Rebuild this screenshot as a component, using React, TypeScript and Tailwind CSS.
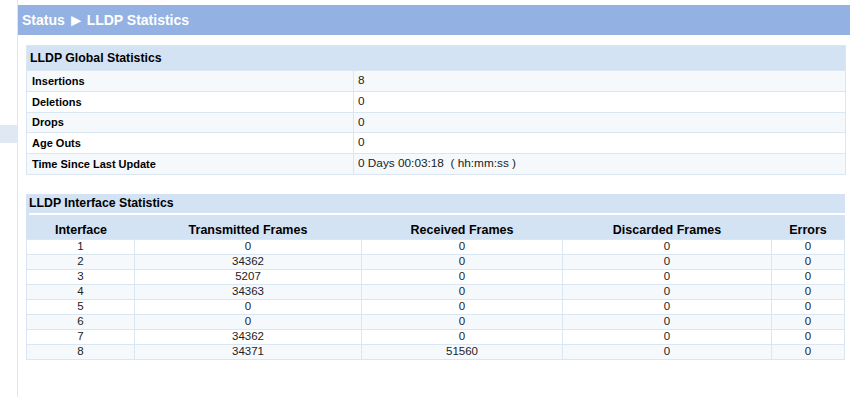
import React from 'react';

const globalStats = [
  { label: 'Insertions', value: '8', h: 'h-[21px]' },
  { label: 'Deletions', value: '0', h: 'h-[21px]' },
  { label: 'Drops', value: '0', h: 'h-[20px]' },
  { label: 'Age Outs', value: '0', h: 'h-[21px]' },
  { label: 'Time Since Last Update', value: '0 Days 00:03:18  ( hh:mm:ss )', h: 'h-[21px]' },
];

const ifaceRows = [
  ['1', '0', '0', '0', '0'],
  ['2', '34362', '0', '0', '0'],
  ['3', '5207', '0', '0', '0'],
  ['4', '34363', '0', '0', '0'],
  ['5', '0', '0', '0', '0'],
  ['6', '0', '0', '0', '0'],
  ['7', '34362', '0', '0', '0'],
  ['8', '34371', '51560', '0', '0'],
];

const columns = ['Interface', 'Transmitted Frames', 'Received Frames', 'Discarded Frames', 'Errors'];
const colWidths = ['w-[108px]', 'w-[227px]', 'w-[201px]', 'w-[209px]', 'w-[73px]'];

export default function App() {
  return (
    <div
      className="flex w-[850px] h-[397px] bg-white overflow-hidden text-black"
      style={{ fontFamily: '"Liberation Sans", Arial, sans-serif' }}
    >
      {/* sidebar stub */}
      <div className="w-[18px] shrink-0 border-r border-[#dde6f2] pt-[125px]">
        <div className="h-[18px] bg-[#e0e8f4]" />
      </div>

      <div className="flex-1 pt-[5px]">
        <div className="h-[30px] bg-[#93b1e2] pl-[4px] flex items-center text-white font-bold text-[14px]">
          Status
          <span className="ml-[3px] mr-[2px] text-[17px] leading-none">►</span>
          LLDP Statistics
        </div>

        <div className="pl-[8px] pr-[4px]">
          {/* global statistics */}
          <div className="mt-[10px] border border-[#dbe6f3]">
            <div className="h-[24px] bg-[#d4e3f4] pl-[3px] flex items-center font-bold text-[12.3px]">
              LLDP Global Statistics
            </div>
            {globalStats.map((row, idx) => (
              <div
                key={row.label}
                className={`flex ${row.h} border-t border-[#dbe6f3] ${idx % 2 === 0 ? 'bg-[#f6f9fc]' : 'bg-white'}`}
              >
                <div className="w-[327px] pl-[5px] flex items-center font-bold text-[11px] border-r border-[#dbe6f3]">
                  {row.label}
                </div>
                <div className="flex-1 pl-[4px] flex items-center text-[11.8px] text-[#222] whitespace-pre">
                  {row.value}
                </div>
              </div>
            ))}
          </div>

          {/* interface statistics */}
          <div className="mt-[19px] mr-[1px] bg-[#d4e3f4]">
            <div className="h-[19px] pl-[3px] flex items-center font-bold text-[12.3px]">
              LLDP Interface Statistics
            </div>
            <div className="ml-[3px] h-[2px] bg-white" />
            <table className="table-fixed border-collapse w-full">
              <thead>
                <tr className="h-[24px]">
                  {columns.map((c, i) => (
                    <th
                      key={c}
                      className={`${colWidths[i]} font-bold text-[12.5px] leading-[13px] text-center align-bottom pb-[2px] ${i === 0 ? 'pl-[1px]' : ''}`}
                    >
                      {c}
                    </th>
                  ))}
                </tr>
              </thead>
              <tbody>
                {ifaceRows.map((r, idx) => (
                  <tr key={r[0]} className={`h-[15px] ${idx % 2 === 0 ? 'bg-white' : 'bg-[#f6f9fc]'}`}>
                    {r.map((v, i) => (
                      <td
                        key={i}
                        className="border border-[#dbe6f3] text-center text-[11.5px] leading-[13px] text-[#222] p-0"
                      >
                        {v}
                      </td>
                    ))}
                  </tr>
                ))}
              </tbody>
            </table>
          </div>
        </div>
      </div>
    </div>
  );
}
